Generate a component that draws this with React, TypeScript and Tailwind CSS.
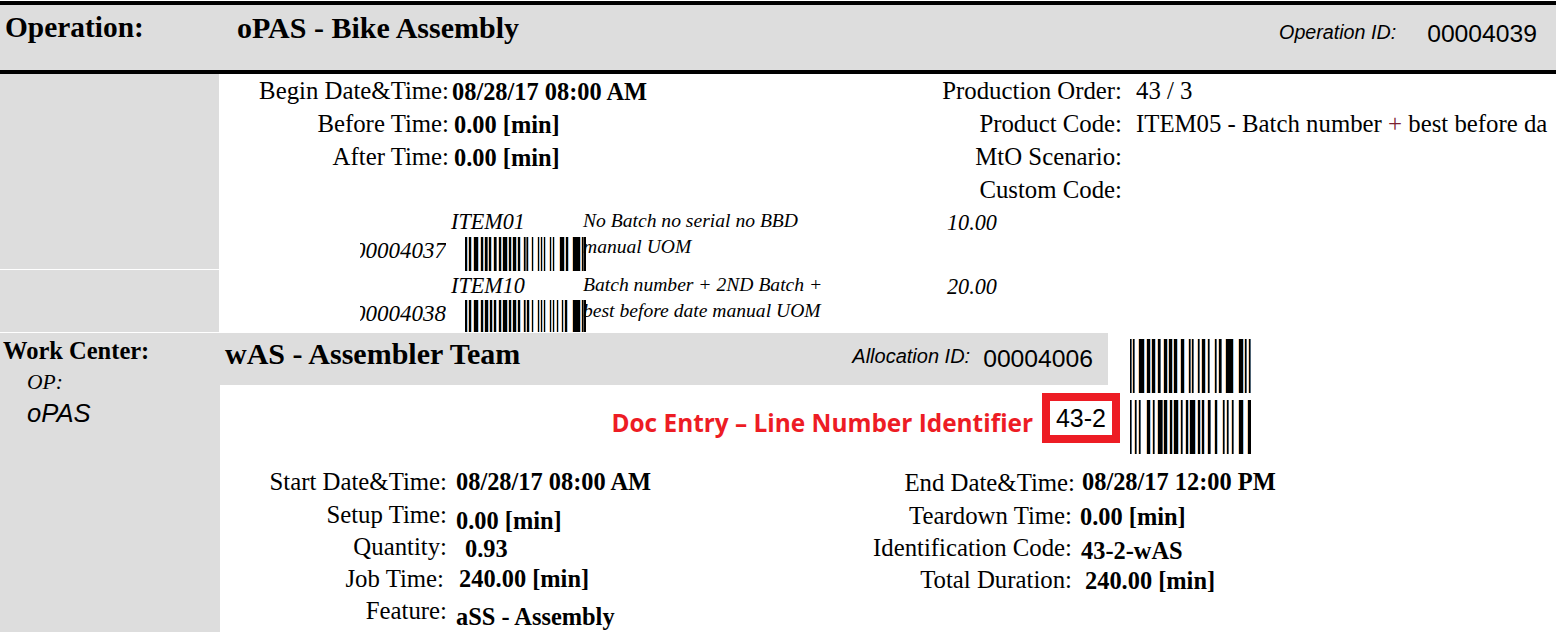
import React from 'react'

type Bar = [number, number]

// bars are [offset, width] in px, read off the reference
const itemBarsA: Bar[] = [[0,2],[4,2],[9,4],[16,2],[20,2.5],[24,2],[29,2.5],[34,2],[38,4],[44,2],[48,3],[53,2],[59,1.5],[61.5,1.5],[67,1],[73,1],[76,1],[79,1],[85,1],[88,1],[95,4],[101,2],[108,7],[117,1],[118.5,2.5]]
const itemBarsB: Bar[] = [[0,2],[4,2],[9,4],[16,2],[20,3],[25,2],[29,2],[34,2],[38,4],[44,2],[48,3],[53,2],[59,1.5],[62,2],[67,1],[73,1],[76,1],[79,1],[85,1],[88,1],[92,1],[97,1],[100,2],[108,7],[117,1],[118.5,2.5]]
const sideBarsA: Bar[] = [[0,1.5],[3,1.5],[9,5],[17,3],[22,3],[28,2.5],[34,3],[39,3],[44,3],[51,3],[59,1.5],[62,1.5],[68,1.5],[72,3],[78,1.5],[85,1.5],[89,2.5],[96,7],[109,4],[115,1.5],[119,1.5]]
const sideBarsB: Bar[] = [[0,1.5],[5,1.5],[9,1.5],[17,3],[23,1.5],[28,4.5],[34,3],[40,2],[44,4],[51,1.5],[56,2],[60,5],[68,2],[72,2],[78,2.5],[85,2],[93,1.5],[97,1.5],[102,1.5],[109,4],[118,3]]

function Barcode({ bars, width, height }: { bars: Bar[]; width: number; height: number }) {
  return (
    <svg width={width} height={height} viewBox={`0 0 ${width} ${height}`} className="block shrink-0">
      {bars.map(([x, w]) => (
        <g key={x}>
          <rect x={x - 0.5} width={0.5} height={height} fill="#e8a050" />
          <rect x={x + w} width={0.5} height={height} fill="#3b8fd0" />
          <rect x={x} width={w} height={height} fill="#000" />
        </g>
      ))}
    </svg>
  )
}

type ItemRowProps = {
  code: string
  item: string
  lines: string[]
  qty: string
  bars: Bar[]
  rowClass: string
  itemClass: string
  codeClass: string
}

function ItemRow({ code, item, lines, qty, bars, rowClass, itemClass, codeClass }: ItemRowProps) {
  return (
    <div className={`flex italic text-[22.2px] leading-[26px] ${rowClass}`}>
      <div className={`ml-[141px] flex h-[26px] w-[86px] justify-end overflow-hidden whitespace-nowrap text-[23px] ${codeClass}`}>{code}</div>
      <div className="ml-[5px] w-[132px]">
        <div className={`mt-[1px] ${itemClass}`}>{item}</div>
        <div className="ml-[14px]">
          <Barcode bars={bars} width={121} height={34} />
        </div>
      </div>
      <div className="w-[364px] text-[19.6px] leading-[26px] whitespace-nowrap">
        {lines.map((l) => (
          <div key={l}>{l}</div>
        ))}
      </div>
      <div className="mt-[2px]">{qty}</div>
    </div>
  )
}

const detailLeft = [
  { label: 'Start Date&Time:', value: '08/28/17 08:00 AM', w: 'w-[227px]', v: 'ml-[9px]', y: 'pt-0' },
  { label: 'Setup Time:', value: '0.00 [min]', w: 'w-[227px]', v: 'ml-[9px]', y: 'pt-[6px]' },
  { label: 'Quantity:', value: '0.93', w: 'w-[227px]', v: 'ml-[18px]', y: 'pt-[2px]' },
  { label: 'Job Time:', value: '240.00 [min]', w: 'w-[224px]', v: 'ml-[15px]', y: 'pt-0' },
  { label: 'Feature:', value: 'aSS - Assembly', w: 'w-[227px]', v: 'ml-[9px]', y: 'pt-[6px]' },
]
const detailRight = [
  { label: 'End Date&Time:', value: '08/28/17 12:00 PM', w: 'w-[215px]', v: 'ml-[7px]', y: '-mt-px' },
  { label: 'Teardown Time:', value: '0.00 [min]', w: 'w-[212px]', v: 'ml-[8px]', y: 'pt-[1px]' },
  { label: 'Identification Code:', value: '43-2-wAS', w: 'w-[212px]', v: 'ml-[9px]', y: 'pt-[3px]' },
  { label: 'Total Duration:', value: '240.00 [min]', w: 'w-[212px]', v: 'ml-[13px]', y: 'pt-[1px]' },
]

function DetailRow({ row, h }: { row: (typeof detailLeft)[number]; h: string }) {
  return (
    <div className={`flex items-start whitespace-nowrap text-[24.8px] leading-[32px] ${h}`}>
      <div className={`text-right ${row.w}`}>{row.label}</div>
      <div className={`font-bold text-[24.4px] ${row.v} ${row.y}`}>{row.value}</div>
    </div>
  )
}

export default function App() {
  return (
    <div className="h-[632px] w-[1556px] overflow-hidden bg-white pt-px text-black font-['Liberation_Serif',serif]">
      {/* Operation header */}
      <div className="flex h-[73px] items-start border-y-4 border-black bg-[#dddddd]">
        <div className="w-[237px] pl-[5px] text-[29.4px] font-bold leading-[45px]">Operation:</div>
        <div className="text-[30px] font-bold leading-[46px]">oPAS - Bike Assembly</div>
        <div className="ml-auto flex items-start pr-[19px] pt-[11px] font-['Liberation_Sans',sans-serif]">
          <span className="text-[19.7px] italic leading-[32px]">Operation ID:</span>
          <span className="ml-[31px] text-[24.7px] leading-[36px]">00004039</span>
        </div>
      </div>

      <div className="flex">
        <div className="flex w-[219px] shrink-0 flex-col">
          <div className="h-[195px] bg-[#dddddd]" />
          <div className="mt-px h-[62px] bg-[#dddddd]" />
        </div>
        <div className="min-w-0 flex-1">
          <div className="flex h-[134px] whitespace-nowrap text-[24.8px] leading-[33px]">
            <div className="w-[700px]">
              {[
                ['Begin Date&Time:', '08/28/17 08:00 AM', 'ml-[3px]'],
                ['Before Time:', '0.00 [min]', 'ml-[5px]'],
                ['After Time:', '0.00 [min]', 'ml-[5px]'],
              ].map(([label, value, m]) => (
                <div key={label} className="flex h-[33px]">
                  <div className="w-[230px] text-right">{label}</div>
                  <div className={`pt-px text-[24.4px] font-bold ${m}`}>{value}</div>
                </div>
              ))}
            </div>
            <div>
              {[
                ['Production Order:', '43 / 3'],
                ['Product Code:', 'ITEM05 - Batch number + best before da'],
                ['MtO Scenario:', ''],
                ['Custom Code:', ''],
              ].map(([label, value]) => (
                <div key={label} className="flex h-[33px]">
                  <div className="w-[203px] text-right">{label}</div>
                  <div className="ml-[14px]">
                    {value.includes('+') ? (
                      <>
                        ITEM05 - Batch number <span className="text-[#7a2030]">+</span> best before da
                      </>
                    ) : (
                      value
                    )}
                  </div>
                </div>
              ))}
            </div>
          </div>
          <ItemRow code="00004037" item="ITEM01" lines={['No Batch no serial no BBD', 'manual UOM']} qty="10.00" bars={itemBarsA} rowClass="h-[62px]" itemClass="h-[28px]" codeClass="mt-[30px]" />
          <ItemRow code="00004038" item="ITEM10" lines={['Batch number + 2ND Batch +', 'best before date manual UOM']} qty="20.00" bars={itemBarsB} rowClass="h-[62px] overflow-hidden pt-[2px]" itemClass="h-[27px]" codeClass="mt-[29px]" />
        </div>
      </div>

      {/* Work center */}
      <div className="mt-px flex">
        <div className="h-[299px] w-[220px] shrink-0 bg-[#dddddd] pl-[3px]">
          <div className="text-[24.5px] font-bold leading-[36px]">Work Center:</div>
          <div className="ml-[24px] text-[21.5px] italic leading-[26px]">OP:</div>
          <div className="ml-[24px] mt-[3px] font-['Liberation_Sans',sans-serif] text-[25.6px] italic leading-[30px]">oPAS</div>
        </div>
        <div className="min-w-0 flex-1">
          <div className="flex h-[133px]">
            <div className="w-[900px]">
              <div className="flex h-[52px] w-[888px] items-start bg-[#dddddd]">
                <div className="pl-[5px] text-[30px] font-bold leading-[41px]">wAS - Assembler Team</div>
                <div className="ml-auto flex items-start pr-[15px] pt-[7px] font-['Liberation_Sans',sans-serif]">
                  <span className="text-[20px] italic leading-[32px]">Allocation ID:</span>
                  <span className="ml-[13px] text-[24.7px] leading-[38px]">00004006</span>
                </div>
              </div>
              <div className="mt-[8px] flex h-[50px] items-start justify-end gap-[9px]">
                <span className="mt-[10px] font-['Open_Sans',sans-serif] text-[24.4px] font-bold leading-[40px] text-[#ed1c24]">Doc Entry – Line Number Identifier</span>
                <div className="flex h-[50px] w-[78px] items-center justify-center border-[8px] border-[#ed1c24] pt-px font-['Liberation_Sans',sans-serif] text-[25px]">43-2</div>
              </div>
            </div>
            <div className="ml-[10px] flex flex-col gap-[7px] pt-[6px]">
              <Barcode bars={sideBarsA} width={121} height={54} />
              <Barcode bars={sideBarsB} width={121} height={54} />
            </div>
          </div>
          <div className="flex">
            <div className="w-[640px]">
              {detailLeft.map((row, i) => (
                <DetailRow key={row.label} row={row} h={i === 0 ? 'h-[33px]' : 'h-[32px]'} />
              ))}
            </div>
            <div className="pt-px">
              {detailRight.map((row, i) => (
                <DetailRow key={row.label} row={row} h={i === 0 ? 'h-[33px]' : 'h-[32px]'} />
              ))}
            </div>
          </div>
        </div>
      </div>
    </div>
  )
}
